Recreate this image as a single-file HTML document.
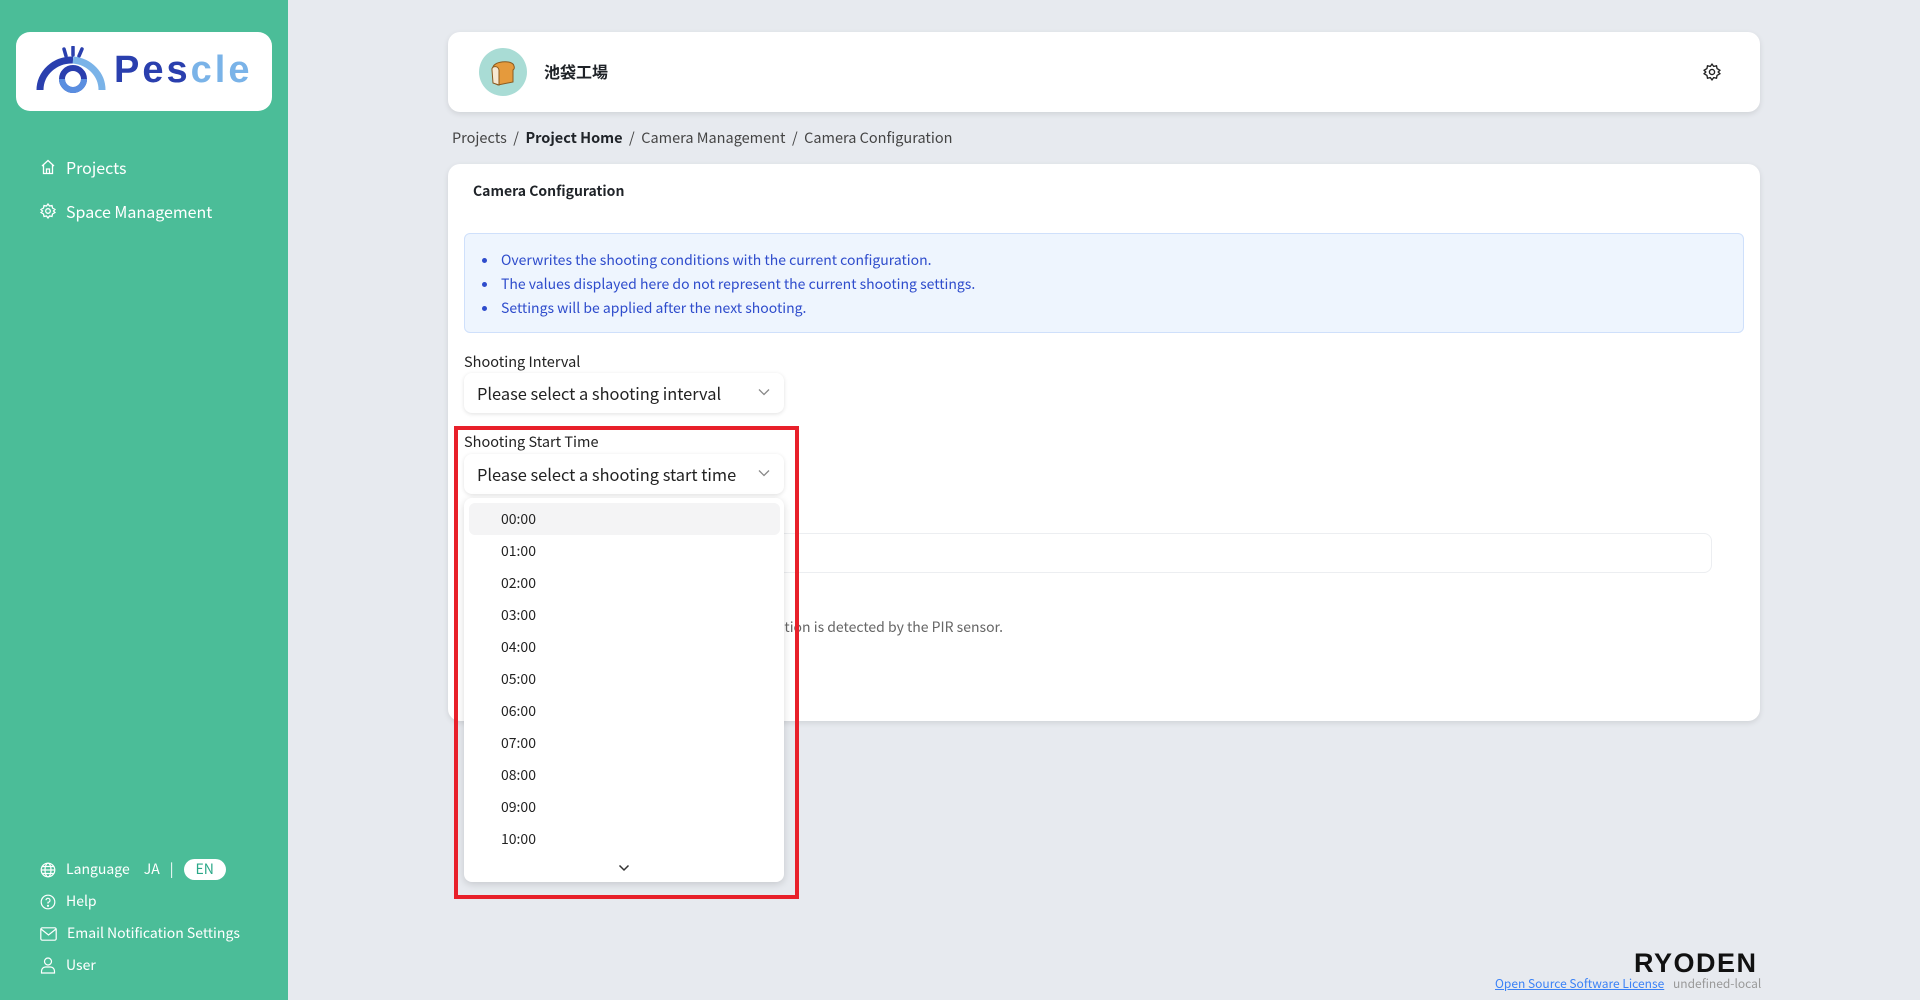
<!DOCTYPE html>
<html><head><meta charset="utf-8"><style>
*{box-sizing:border-box;margin:0;padding:0}
body{width:1920px;height:1000px;background:#e7eaef;font-family:"Noto Sans CJK JP","Liberation Sans",sans-serif;position:relative;overflow:hidden;color:#1f2328}
.abs{position:absolute}
.side{left:0;top:0;width:288px;height:1000px;background:#4bbd98}
.logo{left:16px;top:32px;width:256px;height:79px;background:#fff;border-radius:14px}
.nav{color:#fff;font-size:16px;display:flex;align-items:center;gap:10px;left:40px;line-height:22px}
.nav2{color:#fff;font-size:14px;display:flex;align-items:center;gap:10px;left:40px;line-height:21px}
.card{background:#fff;border-radius:12px;box-shadow:0 2px 6px rgba(0,0,0,.1)}
.info{left:464px;top:233px;width:1280px;height:100px;background:#eef5fe;border:1px solid #cfe0fb;border-radius:6px}
.info li{position:absolute;left:36px;font-size:14px;color:#2e4ccc;list-style:none;line-height:20px}
.info li:before{content:"";position:absolute;left:-19px;top:8px;width:5px;height:5px;border-radius:50%;background:#2e4ccc}
.lbl{font-size:14.5px;color:#222;left:464px;line-height:20px}
.sel{left:464px;width:320px;height:40px;background:#fff;border-radius:8px;box-shadow:0 1px 4px rgba(0,0,0,.12);font-size:16.4px;color:#222;padding-left:13px;line-height:40px}
.sel svg{position:absolute;right:14px;top:15px}
.dd{left:464px;top:498px;width:320px;height:384px;background:#fff;border-radius:8px;box-shadow:0 2px 8px rgba(0,0,0,.15)}
.it{position:absolute;left:37px;font-size:14px;color:#222;line-height:20px}
</style></head><body>
<div class="abs side"></div>
<div class="abs logo">
<svg class="abs" style="left:20px;top:14px" width="70" height="50" viewBox="0 0 70 50">
<path d="M28 3 L30 10 M37 1 L37 9 M46 3 L43 10" stroke="#2a3fae" stroke-width="3.5" stroke-linecap="round"/>
<path d="M4 44 A32 30 0 0 1 37 14" stroke="#2a3fae" stroke-width="7" fill="none"/>
<path d="M37 14 A32 30 0 0 1 66 44" stroke="#7ab3e8" stroke-width="7" fill="none"/>
<circle cx="37" cy="33" r="11" stroke="#2a3fae" stroke-width="6" fill="none"/>
<path d="M26 33 A11 11 0 0 0 48 33" stroke="#5a8ee0" stroke-width="6" fill="none"/>
</svg>
<div class="abs" style="left:98px;top:14px;font-size:38px;font-weight:bold;letter-spacing:3px;line-height:48px;font-family:'Liberation Sans',sans-serif"><span style="color:#2a3fae">Pes</span><span style="color:#7ab3e8">cle</span></div>
</div>
<div class="abs nav" style="top:156px"><svg width="16" height="16" viewBox="0 0 16 16" fill="none" stroke="#fff" stroke-width="1.3"><path d="M2 7 L8 1.5 L14 7 M3.5 6 V14.5 H12.5 V6 M6.5 14.5 V10 H9.5 V14.5"/></svg>Projects</div>
<div class="abs nav" style="top:200px"><svg width="16" height="16" viewBox="0 0 16 16" fill="none" stroke="#fff" stroke-width="1.3"><circle cx="8" cy="8" r="2.3"/><path d="M8 1 L9.5 3 L12 2.5 L12.5 5 L15 6.5 L13.5 8 L15 9.5 L12.5 11 L12 13.5 L9.5 13 L8 15 L6.5 13 L4 13.5 L3.5 11 L1 9.5 L2.5 8 L1 6.5 L3.5 5 L4 2.5 L6.5 3 Z"/></svg>Space Management</div>
<div class="abs nav2" style="top:859px"><svg width="16" height="16" viewBox="0 0 16 16" fill="none" stroke="#fff" stroke-width="1.2"><circle cx="8" cy="8" r="6.8"/><ellipse cx="8" cy="8" rx="3" ry="6.8"/><path d="M1.2 8 H14.8 M2.5 4.5 H13.5 M2.5 11.5 H13.5"/></svg>Language<span style="margin-left:4px">JA</span><span>|</span><span style="background:#fff;color:#2aa888;border-radius:11px;padding:0 12px;line-height:21px">EN</span></div>
<div class="abs nav2" style="top:891px"><svg width="16" height="16" viewBox="0 0 16 16" fill="none" stroke="#fff" stroke-width="1.2"><circle cx="8" cy="8" r="6.8"/><path d="M6 6.2 A2 2 0 1 1 8 8.3 V9.6"/><circle cx="8" cy="11.8" r=".5" fill="#fff"/></svg>Help</div>
<div class="abs nav2" style="top:923px"><svg width="17" height="14" viewBox="0 0 17 14" fill="none" stroke="#fff" stroke-width="1.2"><rect x=".8" y=".8" width="15.4" height="12.4" rx="1.5"/><path d="M1 2 L8.5 8 L16 2"/></svg>Email Notification Settings</div>
<div class="abs nav2" style="top:955px"><svg width="16" height="17" viewBox="0 0 16 17" fill="none" stroke="#fff" stroke-width="1.2"><circle cx="8" cy="4.5" r="3.5"/><path d="M1.5 16 V14 A4 4 0 0 1 5.5 10 H10.5 A4 4 0 0 1 14.5 14 V16 Z"/></svg>User</div>

<div class="abs card" style="left:448px;top:32px;width:1312px;height:80px">
<div class="abs" style="left:31px;top:16px;width:48px;height:48px;border-radius:50%;background:#a9dcd5"></div>
<svg class="abs" style="left:40px;top:25px" width="30" height="30" viewBox="0 0 30 30"><path d="M5 12 C3 4 25 2 26 9 C27 12 25 13 25 13 V25 L10 28 L6 26 Z" fill="#e59a3c" stroke="#8a5a1f" stroke-width="1"/><path d="M4 13 C3 9 10 8 11 13 V28 L5 26 Z" fill="#f6e8d2" stroke="#8a5a1f" stroke-width="1"/></svg>
<div class="abs" style="left:96px;top:28px;font-size:16px;font-weight:bold;line-height:22px">池袋工場</div>
<svg class="abs" style="left:1255px;top:31px" width="18" height="18" viewBox="0 0 16 16" fill="none" stroke="#222" stroke-width="1.2"><circle cx="8" cy="8" r="2.3"/><path d="M8 1 L9.5 3 L12 2.5 L12.5 5 L15 6.5 L13.5 8 L15 9.5 L12.5 11 L12 13.5 L9.5 13 L8 15 L6.5 13 L4 13.5 L3.5 11 L1 9.5 L2.5 8 L1 6.5 L3.5 5 L4 2.5 L6.5 3 Z"/></svg>
</div>
<div class="abs" style="left:452px;top:128px;font-size:14.5px;color:#444;white-space:pre;line-height:20px">Projects  /  <b style="color:#1f2328">Project Home</b>  /  Camera Management  /  Camera Configuration</div>

<div class="abs card" style="left:448px;top:164px;width:1312px;height:557px"></div>
<div class="abs" style="left:473px;top:181px;font-size:14px;font-weight:bold;line-height:20px">Camera Configuration</div>
<div class="abs info"><ul>
<li style="top:16px">Overwrites the shooting conditions with the current configuration.</li>
<li style="top:40px">The values displayed here do not represent the current shooting settings.</li>
<li style="top:64px">Settings will be applied after the next shooting.</li></ul></div>
<div class="abs lbl" style="top:352px">Shooting Interval</div>
<div class="abs sel" style="top:373px">Please select a shooting interval<svg width="12" height="8" viewBox="0 0 12 8"><path d="M1 1.5 L6 6.5 L11 1.5" stroke="#888" stroke-width="1.3" fill="none"/></svg></div>
<div class="abs lbl" style="top:432px">Shooting Start Time</div>
<div class="abs sel" style="top:454px">Please select a shooting start time<svg width="12" height="8" viewBox="0 0 12 8"><path d="M1 1.5 L6 6.5 L11 1.5" stroke="#888" stroke-width="1.3" fill="none"/></svg></div>
<div class="abs" style="left:464px;top:533px;width:1248px;height:40px;border:1px solid #eceef1;border-radius:8px;background:#fff"></div>
<div class="abs" style="right:917px;top:617px;font-size:14px;color:#666;white-space:nowrap;line-height:20px">Shooting is triggered when motion is detected by the PIR sensor.</div>

<div class="abs dd">
<div class="abs" style="left:5px;top:5px;width:311px;height:32px;background:#f4f4f5;border-radius:6px"></div>
<div class="it" style="top:11px">00:00</div><div class="it" style="top:43px">01:00</div><div class="it" style="top:75px">02:00</div><div class="it" style="top:107px">03:00</div><div class="it" style="top:139px">04:00</div><div class="it" style="top:171px">05:00</div><div class="it" style="top:203px">06:00</div><div class="it" style="top:235px">07:00</div><div class="it" style="top:267px">08:00</div><div class="it" style="top:299px">09:00</div><div class="it" style="top:331px">10:00</div>
<svg class="abs" style="left:154px;top:366px" width="12" height="8" viewBox="0 0 12 8"><path d="M1.5 1.5 L6 6 L10.5 1.5" stroke="#333" stroke-width="1.5" fill="none"/></svg>
</div>
<div class="abs" style="left:454px;top:426px;width:345px;height:473px;border:4px solid #e8202a"></div>

<div class="abs" style="left:1634px;top:948px;font-size:27px;font-weight:bold;color:#111;letter-spacing:1.5px;line-height:30px;font-family:'Liberation Sans',sans-serif">RYODEN</div>
<div class="abs" style="left:1495px;top:976px;font-size:12px;color:#3b82f6;text-decoration:underline;white-space:nowrap;line-height:16px">Open Source Software License</div>
<div class="abs" style="left:1673px;top:976px;font-size:12px;color:#999;white-space:nowrap;line-height:16px">undefined-local</div>
</body></html>
